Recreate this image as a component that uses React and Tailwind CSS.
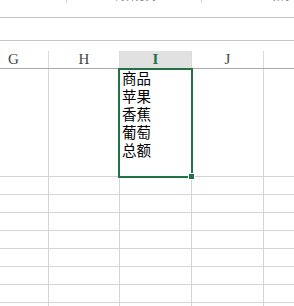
import React from 'react';

const columns = [
  { key: 'G', width: 'w-[49px]', head: 'pl-[8px]' },
  { key: 'H', width: 'w-[71px]', head: 'justify-center' },
  { key: 'I', width: 'w-[72px]', head: 'justify-center' },
  { key: 'J', width: 'w-[72px]', head: 'justify-center' },
  { key: 'K', width: 'w-[72px]', head: 'justify-center' },
];

const cellText = ['商品', '苹果', '香蕉', '葡萄', '总额'];

const App = () => {
  const smallRows = Array.from({ length: 8 }, (_, i) => i);

  return (
    <div
      className="relative w-[294px] h-[306px] overflow-hidden bg-white"
      style={{ fontFamily: '"Noto Sans CJK SC", "Noto Sans", sans-serif' }}
    >
      {/* ribbon bottom edge */}
      <div className="h-[18px] border-b border-[#c6c6c6]">
        <div className="flex h-[3px] overflow-hidden text-[10px] leading-none text-[#777]">
          <div className="w-[67px] border-r border-[#d0d0d0]" />
          <div className="w-[135px] border-r border-[#d0d0d0] flex justify-center">
            <span className="-mt-[9px] pl-[3px]">对齐方式</span>
          </div>
          <div className="flex-1 flex justify-end">
            <span className="-mt-[9px] pr-[1px]">数字</span>
          </div>
        </div>
      </div>

      {/* formula bar */}
      <div className="h-[23px] border-b border-[#c6c6c6]" />
      <div className="h-[10px]" />

      {/* column headers */}
      <div className="flex h-[18px] border-b border-[#ababab]">
        {columns.map(col => (
          <div
            key={col.key}
            className={`${col.width} shrink-0 flex items-center ${col.head} border-r border-[#dadada] text-[15px] leading-none ${
              col.key === 'I' ? 'bg-[#e1e1e1] text-[#217346] font-bold' : 'text-[#444]'
            }`}
            style={{ fontFamily: '"Liberation Serif", serif' }}
          >
            {col.key === 'K' ? '' : col.key}
          </div>
        ))}
      </div>

      {/* tall row with wrapped text */}
      <div className="flex h-[108px] border-b border-[#d4d4d4]">
        {columns.map(col => (
          <div key={col.key} className={`${col.width} shrink-0 border-r border-[#d4d4d4]`}>
            {col.key === 'I' && (
              <div className="pl-[2px] text-[14.5px] leading-[18px] text-black">
                {cellText.map(t => (
                  <div key={t}>{t}</div>
                ))}
              </div>
            )}
          </div>
        ))}
      </div>

      {/* remaining rows */}
      {smallRows.map(r => (
        <div key={r} className="flex h-[18px] border-b border-[#d4d4d4]">
          {columns.map(col => (
            <div key={col.key} className={`${col.width} shrink-0 border-r border-[#d4d4d4]`} />
          ))}
        </div>
      ))}

      {/* selection */}
      <div className="absolute left-[118px] top-[68px] w-[75px] h-[110px] border-2 border-[#217346]" />
      <div className="absolute left-[188px] top-[173px] w-[7px] h-[7px] bg-[#217346] border border-white" />
    </div>
  );
};

export default App;
